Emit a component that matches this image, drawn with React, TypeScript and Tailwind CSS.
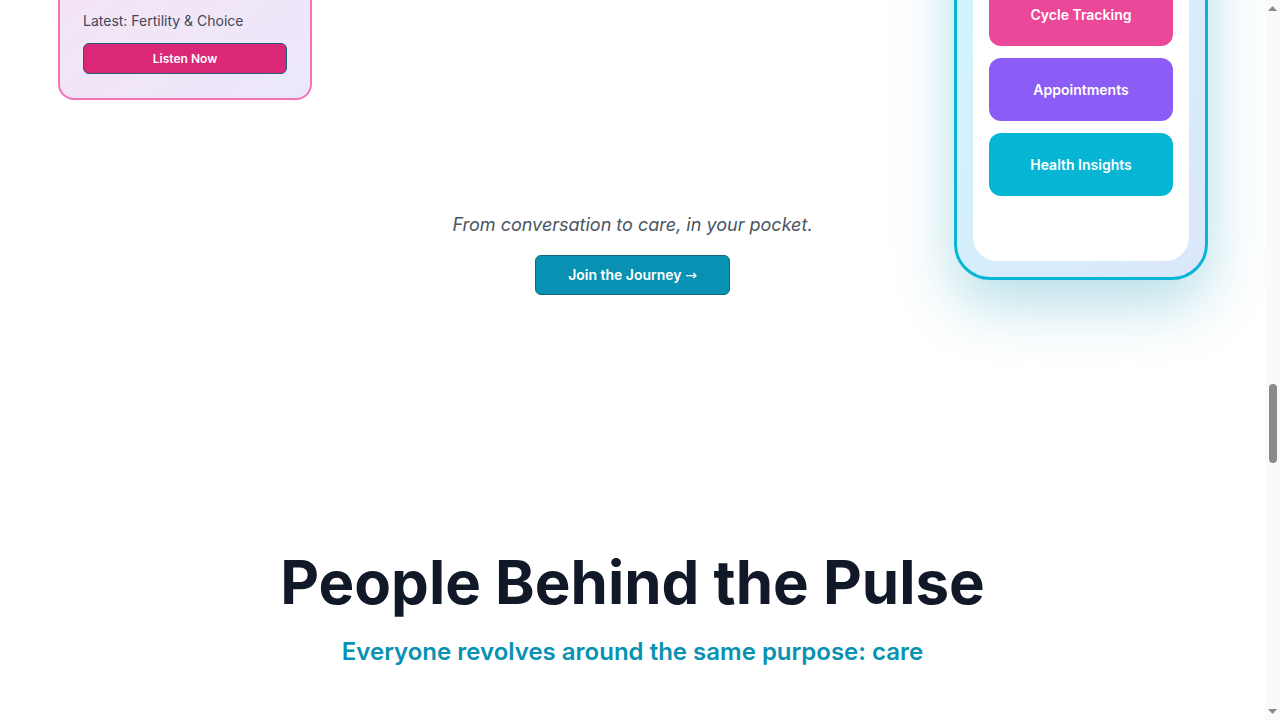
const features = [
  { label: 'Cycle Tracking', color: 'bg-[#ec4899]' },
  { label: 'Appointments', color: 'bg-[#8b5cf6]' },
  { label: 'Health Insights', color: 'bg-[#06b6d4]' },
]

const team = [
  { name: 'Dr. Amina Otieno', role: 'Medical Lead' },
  { name: 'Grace Wanjiku', role: 'Community Health' },
  { name: 'Brian Mwangi', role: 'Product & Engineering' },
]

function Scrollbar() {
  return (
    <div className="flex h-full w-[15px] shrink-0 flex-col items-center bg-[#fafafa] py-[5px]">
      <svg width="9" height="5" viewBox="0 0 9 5" className="mt-px">
        <path d="M4.5 0 L9 5 L0 5 Z" fill="#8a8a8a" />
      </svg>
      <div className="mt-[373px] h-[79px] w-[8px] rounded-full bg-[#8a8a8a]" />
      <svg width="9" height="5" viewBox="0 0 9 5" className="mt-auto mb-px">
        <path d="M0 0 L9 0 L4.5 5 Z" fill="#8a8a8a" />
      </svg>
    </div>
  )
}

export default function App() {
  return (
    <div className="flex h-[720px] overflow-hidden bg-white font-['Inter','Noto_Sans',sans-serif] text-gray-900">
      <main className="min-w-0 flex-1">
        {/* Hero tail */}
        <section className="grid grid-cols-[254px_1fr_254px] items-start px-[57px]">
          {/* Podcast card */}
          <div className="ml-px mt-[-103px] w-[254px] rounded-2xl border-2 border-[#f472b6] bg-gradient-to-br from-[#f6e4f3] to-[#ece8fb] px-[23px] py-6">
            <h3 className="mb-2 text-lg font-bold text-gray-900">Pulse Podcast</h3>
            <p className="mb-3 text-sm text-gray-600">
              Real stories and honest talk about reproductive health.
            </p>
            <p className="mb-3 text-sm text-[#414756]">Latest: Fertility &amp; Choice</p>
            <button className="h-[31px] w-full rounded-md border border-[#1f5f78] bg-[#db2777] text-xs font-semibold text-white">
              Listen Now
            </button>
          </div>

          {/* Center copy */}
          <div className="flex flex-col items-center pt-[211px]">
            <p className="text-lg italic text-[#4b5563]">From conversation to care, in your pocket.</p>
            <button className="mt-4 h-10 rounded-md border border-[#0e6a7a] bg-[#0891b2] px-8 text-sm font-semibold text-white">
              Join the Journey <span className="font-['DejaVu_Sans',sans-serif] font-normal">→</span>
            </button>
          </div>

          {/* Phone mockup */}
          <div className="mt-[-104px] w-[254px] rounded-[36px] border-[3px] border-[#06b6d4] bg-gradient-to-br from-[#cff6fd] to-[#dce6fb] p-4 shadow-[0_24px_60px_rgba(8,145,178,0.3)]">
            <div className="rounded-3xl bg-white px-4 pb-[65px] pt-6">
              <div className="mb-4 h-7 text-center text-lg font-bold text-[#0891b2]">Pulse</div>
              <div className="flex flex-col gap-3">
                {features.map((f) => (
                  <div
                    key={f.label}
                    className={`flex h-[63px] items-center justify-center rounded-xl text-sm font-semibold text-white ${f.color}`}
                  >
                    {f.label}
                  </div>
                ))}
              </div>
            </div>
          </div>
        </section>

        {/* Team */}
        <section className="px-[57px] pt-[257px] pb-24 text-center">
          <h2 className="mb-6 text-6xl font-bold text-[#111827]">People Behind the Pulse</h2>
          <p className="text-2xl font-semibold text-[#0891b2]">Everyone revolves around the same purpose: care</p>

          <div className="mx-auto mt-16 grid max-w-4xl grid-cols-3 gap-8">
            {team.map((m) => (
              <div key={m.name} className="rounded-2xl border border-gray-200 p-6">
                <div className="mx-auto mb-4 h-20 w-20 rounded-full bg-gradient-to-br from-pink-400 to-cyan-400" />
                <div className="font-semibold">{m.name}</div>
                <div className="text-sm text-gray-500">{m.role}</div>
              </div>
            ))}
          </div>
        </section>
      </main>
      <Scrollbar />
    </div>
  )
}
